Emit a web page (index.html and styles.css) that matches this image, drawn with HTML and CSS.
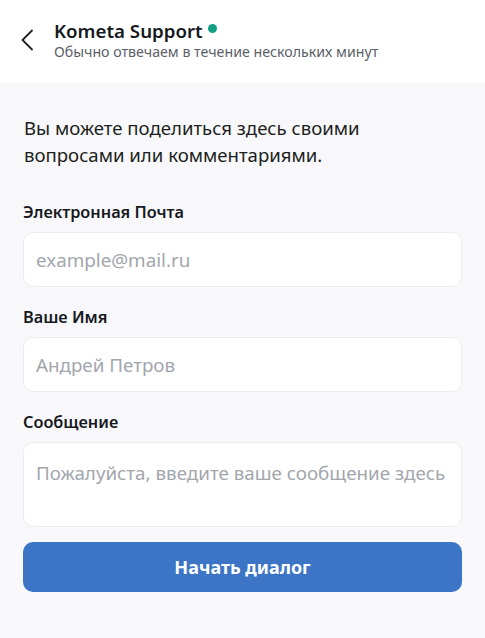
FILE: index.html
```html
<!DOCTYPE html>
<html lang="ru">
<head>
<meta charset="utf-8">
<title>Kometa Support</title>
<link rel="stylesheet" href="styles.css">
</head>
<body>
<header class="header">
  <button class="back" aria-label="Назад">
    <svg width="14" height="22" viewBox="0 0 14 22"><path d="M12 1.5 L2.5 11 L12 20.5" fill="none" stroke="#1f2328" stroke-width="1.8" stroke-linecap="round" stroke-linejoin="round"/></svg>
  </button>
  <div class="titles">
    <div class="title">Kometa Support <span class="dot"></span></div>
    <div class="subtitle">Обычно отвечаем в течение нескольких минут</div>
  </div>
</header>
<main class="content">
  <p class="intro">Вы можете поделиться здесь своими<br>вопросами или комментариями.</p>
  <label class="label">Электронная Почта</label>
  <input class="field" type="text" placeholder="example@mail.ru">
  <label class="label">Ваше Имя</label>
  <input class="field" type="text" placeholder="Андрей Петров">
  <label class="label">Сообщение</label>
  <textarea class="field area" placeholder="Пожалуйста, введите ваше сообщение здесь"></textarea>
  <button class="submit">Начать диалог</button>
</main>
</body>
</html>
```
FILE: styles.css
```css
* { box-sizing: border-box; }
html, body { margin: 0; padding: 0; }
body {
  font-family: "Noto Sans", "Open Sans", sans-serif;
  background: #f8f8fa;
  color: #1c1e21;
  width: 485px;
  height: 638px;
}
.header {
  background: #fff;
  height: 82px;
  display: flex;
  align-items: center;
  padding-left: 20px;
  padding-bottom: 2px;
}
.back {
  background: none;
  border: 0;
  padding: 0;
  width: 14px;
  height: 22px;
  margin-right: 20px;
  display: flex;
}
.titles { display: flex; flex-direction: column; }
.title {
  font-size: 18.7px;
  font-weight: 600;
  line-height: 22px;
  color: #16191d;
  display: flex;
  align-items: center;
}
.dot {
  width: 9px;
  height: 9px;
  border-radius: 50%;
  background: #14a085;
  margin-left: 5px;
  margin-top: -5px;
}
.subtitle {
  font-size: 14.2px;
  line-height: 19px;
  color: #5b6068;
}
.content {
  padding: 0 23px 0 23px;
  display: flex;
  flex-direction: column;
}
.intro {
  margin: 32px 0 0 1px;
  font-size: 18.6px;
  line-height: 27px;
  color: #1c1e21;
}
.label {
  display: block;
  font-size: 16.3px;
  font-weight: 600;
  line-height: 22px;
  margin-top: 19px;
  margin-bottom: 9px;
  color: #16191d;
}
.intro + .label { margin-top: 33px; }
.field {
  display: block;
  width: 100%;
  height: 55px;
  border: 1px solid #ececef;
  border-radius: 10px;
  background: #fff;
  padding: 0 12px;
  font-family: inherit;
  font-size: 18.8px;
  color: #1c1e21;
  outline: none;
}
.field::placeholder { color: #a2a6ad; }
.area {
  height: 85px;
  padding-top: 17px;
  resize: none;
  line-height: 26px;
}
.submit {
  margin-top: 15px;
  height: 50px;
  width: 100%;
  border: 0;
  border-radius: 10px;
  background: #3c74c6;
  color: #fff;
  font-family: inherit;
  font-size: 18px;
  font-weight: 700;
}
```
